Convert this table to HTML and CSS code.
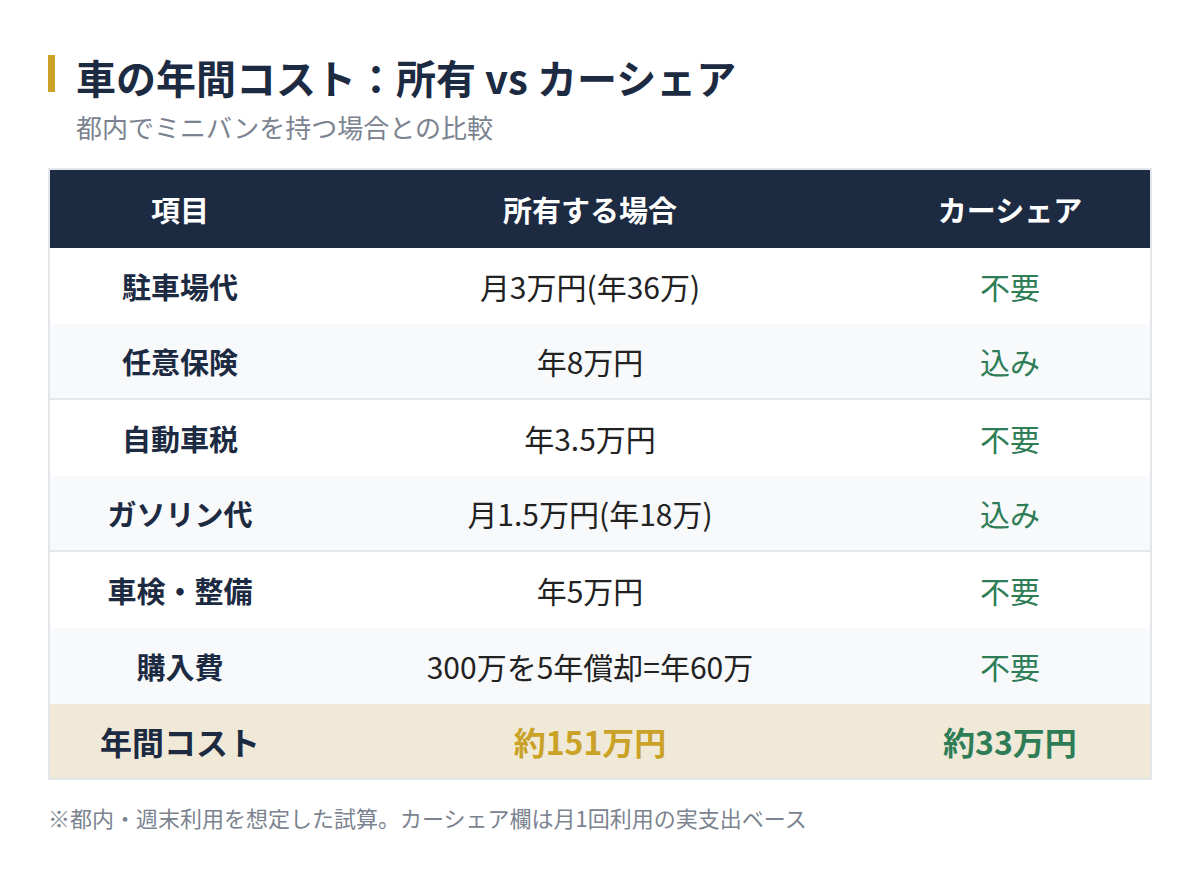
FILE: index.html
```html
<!DOCTYPE html>
<html lang="ja">
<head>
<meta charset="utf-8">
<link rel="stylesheet" href="styles.css">
</head>
<body>
<div class="page">
  <header class="head">
    <h1 class="title">車の年間コスト：所有 vs カーシェア</h1>
    <p class="subtitle">都内でミニバンを持つ場合との比較</p>
  </header>
  <div class="table">
    <div class="row row-head">
      <div class="c1">項目</div>
      <div class="c2">所有する場合</div>
      <div class="c3">カーシェア</div>
    </div>
    <div class="row">
      <div class="c1">駐車場代</div>
      <div class="c2">月3万円(年36万)</div>
      <div class="c3">不要</div>
    </div>
    <div class="row alt">
      <div class="c1">任意保険</div>
      <div class="c2">年8万円</div>
      <div class="c3">込み</div>
    </div>
    <div class="row">
      <div class="c1">自動車税</div>
      <div class="c2">年3.5万円</div>
      <div class="c3">不要</div>
    </div>
    <div class="row alt">
      <div class="c1">ガソリン代</div>
      <div class="c2">月1.5万円(年18万)</div>
      <div class="c3">込み</div>
    </div>
    <div class="row">
      <div class="c1">車検・整備</div>
      <div class="c2">年5万円</div>
      <div class="c3">不要</div>
    </div>
    <div class="row alt last-alt">
      <div class="c1">購入費</div>
      <div class="c2">300万を5年償却=年60万</div>
      <div class="c3">不要</div>
    </div>
    <div class="row row-total">
      <div class="c1">年間コスト</div>
      <div class="c2">約151万円</div>
      <div class="c3">約33万円</div>
    </div>
  </div>
  <p class="note">※都内・週末利用を想定した試算。カーシェア欄は月1回利用の実支出ベース</p>
</div>
</body>
</html>
```
FILE: styles.css
```css
* { box-sizing: border-box; }
html, body { margin: 0; padding: 0; background: #ffffff; }
body {
  font-family: "Noto Sans CJK JP", "Noto Sans", sans-serif;
  color: #222222;
}
.page {
  width: 1200px;
  padding: 55px 48px 0 48px;
}
.head { margin: 0 0 24px 0; }
.title {
  margin: 0;
  font-size: 40px;
  line-height: 45px;
  font-weight: 700;
  color: #1c2a42;
  border-left: 7px solid #c9a227;
  padding-left: 21px;
  height: 37px;
  white-space: nowrap;
}
.subtitle {
  margin: 18px 0 0 28px;
  font-size: 26px;
  line-height: 34px;
  color: #7b8390;
}
.table {
  border: 2px solid #e3e6ea;
  width: 1104px;
}
.row {
  display: grid;
  grid-template-columns: 260px 560px 280px;
  height: 76px;
  align-items: center;
  text-align: center;
  font-size: 30px;
  background: #ffffff;
}
.row .c1 { font-weight: 700; color: #1c2a42; font-size: 29px; }
.row .c2 { color: #222222; }
.row .c3 { color: #2e7d57; }
.row.alt { background: #f7f9fb; border-bottom: 2px solid #e3e6ea; }
.row.last-alt { border-bottom: 0; }
.row.row-head {
  background: #1c2a42;
  height: 78px;
}
.row-head .c1, .row-head .c2, .row-head .c3 {
  color: #ffffff;
  font-weight: 700;
  font-size: 29px;
}
.row.row-total {
  background: #f0e9d8;
  height: 74px;
  font-weight: 700;
}
.row-total .c1 { font-size: 32px; }
.row-total .c2 { color: #c9a227; font-weight: 700; font-size: 32px; }
.row-total .c3 { color: #2e7d57; font-weight: 700; font-size: 32px; }
.note {
  margin: 23px 0 0 0;
  font-size: 22px;
  line-height: 28px;
  color: #7b8390;
}
```
